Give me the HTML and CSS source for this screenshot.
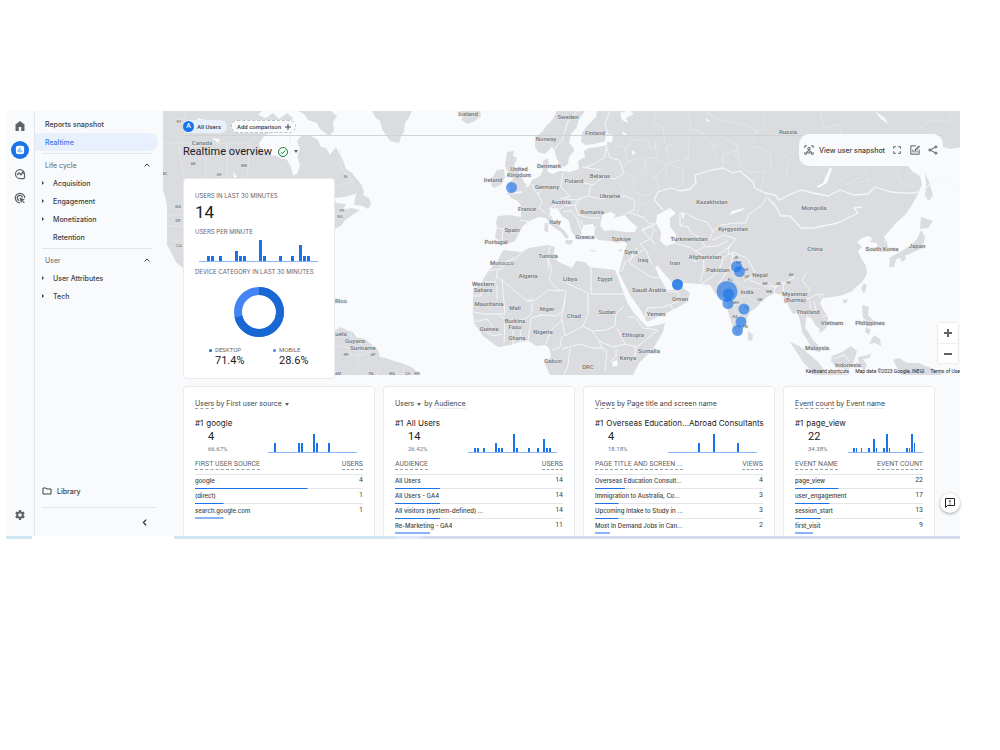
FILE: index.html
```html
<!DOCTYPE html>
<html lang="en">
<head>
    <meta charset="UTF-8">
    <meta name="viewport" content="width=device-width, initial-scale=1.0">
    <title>Realtime overview</title>
    <link rel="stylesheet" href="styles.css">
</head>
<body>
    <div class="app">
        <div class="rail">
            <button class="rail-btn" aria-label="Home"><svg viewBox="0 0 24 24"><path d="M12 2 3 9v13h6.500v-8h5v8H21V9z"/></svg></button>
            <button class="rail-btn active" aria-label="Reports"><svg viewBox="0 0 24 24"><path fill-rule="evenodd" d="M2 4q0-2 2-2h16q2 0 2 2v16q0 2-2 2H4q-2 0-2-2zM6.500 11v6.500h2V11zM11 6.500v11h2v-11zM15.500 14v3.500h2V14z"/></svg></button>
            <button class="rail-btn" aria-label="Explore"><svg viewBox="0 0 24 24" class="line"><path d="M21 20.500V12a9 9 0 1 0-9 9h9M6.500 14l3.500-4 4 3.500 4.500-5.500"/><path d="M15.500 8h3v3"/></svg></button>
            <button class="rail-btn" aria-label="Advertising"><svg viewBox="0 0 24 24" class="line"><path d="M21.500 12A9.500 9.500 0 1 0 12 21.500M17 11a5.200 5.200 0 1 0-6 6"/><path class="solid" d="m11 11 11 4-4.500 2 4 4-1.500 1.500-4-4-2 4z"/></svg></button>
            <button class="rail-btn bottom" aria-label="Admin"><svg viewBox="0 0 24 24"><path fill-rule="evenodd" d="m10 2-.5 3-2 1-2.700-1-2.300 4 2.200 2v2l-2.200 2 2.300 4 2.700-1 2 1 .5 3h4l.5-3 2-1 2.700 1 2.300-4-2.200-2v-2l2.200-2-2.300-4-2.700 1-2-1-.5-3zm2 6.500a3.500 3.500 0 1 1 0 7 3.500 3.500 0 0 1 0-7z"/></svg></button>
        </div>

        <nav class="nav">
            <a class="nav-link" href="#">Reports snapshot</a>
            <a class="nav-link current" href="#">Realtime</a>
            <hr>
            <button class="nav-group">Life cycle <svg viewBox="0 0 8 8"><path d="M1.500 5.500 4 3l2.500 2.500"/></svg></button>
            <a class="nav-item more" href="#">Acquisition</a>
            <a class="nav-item more" href="#">Engagement</a>
            <a class="nav-item more" href="#">Monetization</a>
            <a class="nav-item" href="#">Retention</a>
            <hr>
            <button class="nav-group">User <svg viewBox="0 0 8 8"><path d="M1.500 5.500 4 3l2.500 2.500"/></svg></button>
            <a class="nav-item more" href="#">User Attributes</a>
            <a class="nav-item more" href="#">Tech</a>
            <a class="nav-link library" href="#"><svg viewBox="0 0 10 10"><path d="M1 2h3l1 1h4v5H1z"/></svg>Library</a>
            <hr class="last">
            <button class="collapse" aria-label="Collapse"><svg viewBox="0 0 8 8"><path d="M5.500 1.500 3 4l2.500 2.500"/></svg></button>
        </nav>

        <main class="main">
            <section class="stage">
                <div class="map">
                    <svg class="map-svg" viewBox="163 111 797 264" preserveAspectRatio="xMinYMin slice">
                        <!-- Americas, Greenland, Iceland -->
                        <g class="land">
                            <path d="M162 111H262l-4 4 8 3 7-5 6 6 8-6 6 5-3 6-9 2-7 6-9 3-6 8 2 7 8 5 10 1 8 4 4 7 2 8 4-1 3-9-3-9 3-7-3-8 5-6 9 1 7 4 3 7 5 1 4 7 6-8 3 6 4 7 3 9 6 4 3 4 6 7 2 4-8 6-10 3-12 1 4 5 9 1-3 6 9-2 8 2-6 4-9 6-4 6-12 6v36H183l-7-6-4-8-5-9V206l-2-10-3-9z"/>
                            <path d="m354 205 2-11 4-7 4 3-1 5 6 3 2 6-3 5-5-3z"/>
                            <path d="M298 111h33l6 5-4 6 1 9-5 5-9-7-3-6-9-3-4-6zM372 111h40l-4 8-3 4-1 9-3 4-2 7-9-2-4-6-4-6-2-8-5-4z"/>
                            <path d="m457 112 7-2 16 1 1 5-6 5-7 3-7-4 3-4z"/>
                            <path d="m330 334 6-4 5-3 5 3 7 2 3 5 9 2 8 7 5 4 2 7 6 1 8 3 10 3 9 4 7 7h-90z"/>
                        </g>
                        <!-- Europe, Asia, Africa -->
                        <g class="land">
                            <path d="m557 111-4 8-6 6-5 7-7 5v10l3 5 7 2 7-7 3 4 1 6 5 9 3 1 4-3 1-7 5-6-1-4-4-4 2-9 6-7 2-8 6-8h12l-1 6-9 9-5 7-1 8 4 4 9-1 8-2 5-1v4l-9 2-9 1-5 3 1 6-7 4 1 8-9 3-10-1-8 3-5-3 2-6-1-7-5 3v10l-3 5-8 4-3 6-6 3-1 4-13 1 2 4 7 3 3 5v11l-11-2-12 1-2 6 1 5-2 11 5 3 7 3 8-3 4-8 4-7 6-5 10-4 7 1 6 8 9 6 5 7 3-2-5-7-9-7-5-9 1-5 6-1 5 8 7 5 2 9 5 8 6 2-1-9 3-6 9-1 2 4-1 6 4 6 12 1 7 2 8-2 2 3L623 257l-3 10-1 6 11 22 12 17 5 10 30-14 10-6 3-9-8-6-9 3-6 0-7-12-5-11 3-1 9 11 6 6 12 0 15 1 10 1 5 8 5 4 6 3 1 8 3 10 3 10 4 7 3-1 4-8 3-8 3-6 7-5 5-6 5-4 8-4 7 2 4 5 2 5 5 9 4-1 3 7 2 12 4 6 4 7 5 6 5 1-2-7-5-5-4-7-4-5 1-8 1-4 5 3 3 6 4 3 1 5 4-3 4-5v-8l-5-8-3-6 3-5 10-1 10-2 9-4 10-9 5-8-1-8-5-8-3-7 4-4-5-5 5-4 6-2 4 2-2 4 7 1 1 6 3 3h5l2-4-1-6-3-5 6-7 7-8 8-7 7-10 5-9 5-11-2-9-7-4-6-7 8-10 15-3 13-5 7 2 12-2V111z"/>
                            <path d="m503 250-6 12-9 9-7 12-8 9v21l1 10 9 13 15 11 13-2 8-3 10-1 7 5 9-1 4 3 2 8-6 8 5 11h83l6-12 14-14 10-17 2-9-7 2-11 2-5-5-8-9-7-11-5-14-7-18-9-1-16-2-5-5-9-1-4 7-13-6-6-5 2-10-7-2-19 3-8 4z"/>
                            <path d="m507 152 7-1-1 5 4 2-3 8 6 8 4 8 3 3-4 6-8 1-8 3 3-6-1-6 4-4-5-7-3-6zM493 177l4-7 7-1 1 8-3 7-8 4-3-3z"/>
                            <path d="m545 223 3 0v10l-4-3zM566 240l7 0-2 5-6-2zM589 250l8 1-4 1zM618 250l5-1-3 3z"/>
                            <path d="m925 173 4 9 4 13-4 6-4-5 1-12zM921 217l12 4-5 7-8 1zM921 230l4 7-3 11-8 4-12 5-10 4-3-3 11-6 11-7 6-6zM890 259l6 1-2 7-5 0zM900 258l5-2 1 3-4 3z"/>
                            <path d="m748 331 5 4-1 6-4-1zM864 283l3 3-3 8-3-6zM790 342l9 4 11 9 9 8 6 8v4h-10l-12-13zM832 356l10-4 9-6 6 5-3 10-5 8-12-1-6-7zM862 305l7 2-1 8 8 8-4 2-9-7zM866 327l5 3-2 5-4-3zM874 335l6 4 1 7-6-3-6 1zM858 357l10-2 4-2-3 5-6 1 4 6-3 6-5-7zM893 360l6-2 8 5 11 0 16 6 9 6h-42zM826 372l15 1 10 2h-26zM843 300l5-1-2 4-3 0z"/>
                        </g>
                        <!-- inland water -->
                        <g class="water">
                            <path d="m600 225 3-11 8-2 5 3-3 3 12-3 4 5 8 7-2 5-11 0-12-2-8 1zM657 215l13-7 6 5-6 5v9l6 7-1 9-9 3-6-5 1-9-5-9zM732 211l12-3-1 2-13 5zM620 113l9-3 5 4-8 4 2 5-6-3zM606 133l7 2-1 7-7 0zM622 131l5 3-3 2zM817 186l6-3 7-16 2 2-5 14-9 5zM875 111l10 7 3 6-8-6zM612 362l5-2 1 5-5 2zM196 118l10 2 6 4-8 1zM212 138l8 1-2 4zM233 171l4 6-3 1zM205 185l7 2-6 2zM301 121l8 3-2 4zM706 118l4 3-3 1zM681 212l4 1-2 7zM632 150l4 3-4 2z"/>
                        </g>
                        <g class="borders">
                            <path d="M577 111l-9 10-6 20-8 8M597 111l-5 7M610 111l-5 12 4 15M607 146l-3 12-10 6-8 3M600 170l-18-3M563 173l-2 14 9 9-10 3M573 180l20 5 10-8 12 2 9-6-5-13-9-2-4-12M591 186l-3 10 12 3 12-3 14 0 9 5-1 9-9 4M588 196l-10 4-12-1-7 5-8 3-2 11M544 187l-6 7 4 9-3 5 8 6M532 184l3 8 5 2M566 206l9-1 6-8M575 205l3 10 12 3 10 0M563 212l8-1 6 7 4 12M580 220l5 9 12-2M503 229l-1 15M497 228l7 1M520 220l14 3M548 208l10 2 8-5"/>
                            <path d="M525 250l-9 8-11 4-4 7-14 2M497 271v5l30 25 6-2M497 276l-2 6h-14v14h-8M502 279l3 35h-20l-11-2M497 299v-14M550 247l-3 12 5 9-3 12 9 10 8 1M548 270l1-12 6-6M591 264v30l26 0h8M588 301v-8l-22-10M566 291l-3 18-5 7-16-1-11 3M527 301h7l14-11 12 1M532 303v10l-7 6-18 2-8-6M565 300l-4 21-9 8-6 15M588 301v13l-5 12-18 10-3-16M583 326l9 5 14-1 9-4 1-12 8-8M592 331l7 10 14 6 12-3-8-16M562 336l-2 11-8 3M562 349l18-5 12 4 10 0M570 348l-2 17-4 10M599 341l3 7 5 3-2 20M625 344l12 3 10-8 11-9-15-2-8-11h-8M616 349v8l-6 5M635 347v14M531 318l-3 23M505 321l-1 22M513 344v-14M485 331l8 5 9-2M473 322l14-3 6 8M520 330l1 12M542 315l-3 0"/>
                            <path d="M623 263l12-7 9-7M637 247l-8 16 22 14 9 1M652 265l-6-15-6-6 10-5M625 263l-4 9M644 322l3-14 17-1 15-6-1-9-13-1M670 304l4 8M650 239l-8-10 8-3 7 5M630 213l13 4 7 7 7 0M654 230l-3 9 4 5M642 231l12-6M674 243l8 2 9 3 12 8 1 12-4 14M703 256l-8 6-4-4M680 212v14l8 1 3 6 8 4 6 9-10 6M680 226l4-3M686 213l10 6 11 3 6 9-4 9M713 231l8-6 14-2 11 0 2-8 14-10 5-9M712 240l12-5 12 4-6 6-2 8 8 3M705 247l12-1 11-5M703 256l10 2 15-10 4-5M733 252l-10 6-3 12-10 8-9 6M733 252l14 6 8 14-5 8 12 5 12 2 10-4 11-6"/>
                            <path class="thick" d="M663 210l-9-10 4-8 12-4 10 3 10-2 6-6-1-8 17-5 11-2 10 5 7-2 13 11 2 6 10 5 10 2 4 5 10-5 12-5 12 3 15 3 12-6 14 5 14-1 7-7 16 5 13 1 10 0 8-2 12-10 10-6 12 9 3 10 8 4 8 1-2 10-7 6M768 198l8 9 5 9 9 0 11 12h12l15-3 10-2 12-6 8-4-4-5 8-1"/>
                            <path d="M790 279l-7 6 1 9M783 282l-8 6-6-6M775 288l-1 6M806 273l-4 8 8 8-3 5M798 300l12-2 7-4 7 1M810 300v14M817 294l9 9 4 11-7 3M816 310l-2-9M744 282l7-6M733 252l-2 14-12 17M890 236l-6 6M843 353l6 8M833 359l12-4M630 303l-3 0"/>
                        </g>
                        <!-- province and oblast lines -->
                        <g class="borders thin">
                            <path d="M185 111v24l-7 9 6 34M206 143v35M227 143v35M206 143h45M250 143l-3 35M162 143h38M290 133v30M340 148l1 20 12 14-20 5M168 215h16M168 226h14M172 240l12 2M371 352l-14 5 3 14M335 345l13 3 4 8 10-2M382 365l-6 10M395 366l2 9M404 368l-2 7M350 330l4 17M362 341l-2 11"/>
                            <path d="M615 145l12 3 5-8 15 0 4 9 14-7-2-15-9-4 3-12M655 140l2 19 11 6-3 14M625 148l2 14-5 8 13 9 10-7 12 8M627 162l13-4 6 7M635 179l-2 12 12 5 8-4M645 172l1-13 11-2M670 165l13 4v14M670 165l-4-18 9-4M689 111l1 16 15 8 9 12 14-8 10 7-4 10 7 5M690 127l-2 32-18 4M688 159l7 7M714 147l2 12M724 165l-2-10 15-5M738 147l0 18 12 8 15-2-3 14M762 111l4 14-10 8-6 12 20 7 1 15 9 5M705 111l13 9 30 5 10 8M780 152l9 7-3 15 8 4M668 163l-13 14 4 14M683 183l-9 7M600 150l10-5M618 181l7 14 8-4M640 205l9-4 8 11M640 197l-3 17M648 210l-5 9M820 111l4 17 14-4 3 10M862 168l8 11-12 4M835 175l12 10 12-8M897 168l3 15 14 4M920 127l13-7 16 2 4-9"/>
                            <path d="M732 262l8 3 4-5M740 265l-1 12-10 4M735 281l12 7 13 1 8 6M731 298l16-2 9 6M735 303v11l10 1M727 290l7 4M733 320l8 6M766 279l-2 8 8 3M750 296l4-8M745 303l9 4"/>
                        </g>
                        <g class="places">
                            <text x="202" y="145">Canada</text><text x="468" y="116">Iceland</text><text x="568" y="119">Sweden</text><text x="546" y="141">Norway</text><text x="595" y="135">Finland</text><text x="788" y="134">Russia</text><text x="549" y="168">Denmark</text><text x="519" y="171">United</text><text x="519" y="177">Kingdom</text><text x="493" y="182">Ireland</text><text x="547" y="189">Germany</text><text x="574" y="183">Poland</text><text x="600" y="178">Belarus</text><text x="610" y="198">Ukraine</text><text x="561" y="204">Austria</text><text x="527" y="211">France</text><text x="592" y="214">Romania</text><text x="555" y="224">Italy</text><text x="512" y="232">Spain</text><text x="496" y="244">Portugal</text><text x="585" y="239">Greece</text><text x="621" y="241">Türkiye</text><text x="631" y="254">Syria</text><text x="643" y="262">Iraq</text><text x="675" y="265">Iran</text>
                            <text x="712" y="204">Kazakhstan</text><text x="733" y="231">Kyrgyzstan</text><text x="689" y="241">Turkmenistan</text><text x="705" y="259">Afghanistan</text><text x="718" y="272">Pakistan</text><text x="760" y="277">Nepal</text><text x="747" y="294">India</text><text x="815" y="251">China</text><text x="814" y="210">Mongolia</text><text x="882" y="251">South Korea</text><text x="917" y="248">Japan</text><text x="795" y="296">Myanmar</text><text x="795" y="302">(Burma)</text><text x="808" y="314">Thailand</text><text x="832" y="325">Vietnam</text><text x="870" y="325">Philippines</text><text x="817" y="350">Malaysia</text><text x="848" y="367">Indonesia</text>
                            <text x="548" y="258">Tunisia</text><text x="502" y="265">Morocco</text><text x="528" y="278">Algeria</text><text x="570" y="281">Libya</text><text x="605" y="281">Egypt</text><text x="483" y="286">Western</text><text x="483" y="292">Sahara</text><text x="489" y="306">Mauritania</text><text x="515" y="310">Mali</text><text x="547" y="311">Niger</text><text x="574" y="318">Chad</text><text x="607" y="314">Sudan</text><text x="515" y="323">Burkina</text><text x="515" y="329">Faso</text><text x="489" y="331">Guinea</text><text x="517" y="340">Ghana</text><text x="543" y="334">Nigeria</text><text x="633" y="337">Ethiopia</text><text x="649" y="353">Somalia</text><text x="628" y="360">Kenya</text><text x="553" y="363">Gabon</text><text x="588" y="369">DRC</text><text x="656" y="316">Yemen</text><text x="649" y="292">Saudi Arabia</text><text x="680" y="301">Oman</text>
                            <text x="341" y="303">Rico</text><text x="341" y="336">uela</text><text x="355" y="343">Guyana</text><text x="363" y="350">Suriname</text>
                        </g>
                        <g class="places small">
                            <text x="179" y="123">NT</text><text x="193" y="165">AB</text><text x="244" y="167">MB</text><text x="219" y="176">SK</text><text x="165" y="175">BC</text><text x="178" y="208">WA</text><text x="178" y="222">OR</text><text x="179" y="247">CA</text><text x="346" y="178">NL</text><text x="342" y="212">PE</text><text x="340" y="218">NS</text><text x="346" y="356">RR</text><text x="373" y="356">AP</text><text x="338" y="375">AM</text><text x="371" y="375">PA</text><text x="392" y="375">MA</text><text x="408" y="375">CE</text><text x="417" y="375">RN</text>
                            <text x="736" y="259">JK</text><text x="739" y="264">HP</text><text x="746" y="271">UK</text><text x="747" y="278">UP</text><text x="730" y="281">RJ</text><text x="765" y="285">BR</text><text x="779" y="285">ML</text><text x="789" y="284">NL</text><text x="791" y="276">AR</text><text x="769" y="293">WB</text><text x="760" y="301">OR</text><text x="736" y="304">MH</text><text x="746" y="309">TS</text><text x="735" y="318">KA</text><text x="745" y="328">TN</text>
                        </g>
                        <g class="pins">
                            <circle cx="511.500" cy="187.500" r="5.500"/>
                            <circle class="strong" cx="677.500" cy="284.500" r="5.500"/>
                            <circle cx="736.500" cy="266.500" r="5.500"/>
                            <circle cx="739.500" cy="271.500" r="5.500"/>
                            <circle cx="727" cy="291.500" r="10.500"/>
                            <circle cx="728.500" cy="294" r="5.500"/>
                            <circle cx="728" cy="303.500" r="5.500"/>
                            <circle cx="744" cy="309" r="5.500"/>
                            <circle cx="741" cy="322" r="5.500"/>
                            <circle cx="737.500" cy="330.500" r="5.500"/>
                        </g>
                    </svg>
                    <div class="zoom">
                        <button aria-label="Zoom in"><svg viewBox="0 0 10 10"><path d="M5 1v8M1 5h8"/></svg></button>
                        <button aria-label="Zoom out"><svg viewBox="0 0 10 10"><path d="M1 5h8"/></svg></button>
                    </div>
                    <div class="credits">
                        <button>Keyboard shortcuts</button>
                        <span>Map data ©2023 Google, INEGI</span>
                        <a href="#">Terms of Use</a>
                    </div>
                </div>

                <div class="overlay">
                    <div class="chips">
                        <button class="chip"><span class="avatar">A</span>All Users</button>
                        <button class="chip add">Add comparison <svg viewBox="0 0 8 8"><path d="M4 1v6M1 4h6"/></svg></button>
                    </div>
                    <header class="header">
                        <div class="heading">
                            <h1>Realtime overview</h1>
                            <button class="status" aria-label="Data status">
                                <svg viewBox="0 0 12 12"><circle cx="6" cy="6" r="4.500"/><path d="m3.800 6.200 1.600 1.500 2.900-3.200"/></svg>
                                <i class="caret"></i>
                            </button>
                        </div>
                        <div class="toolbar">
                            <button class="snapshot"><svg viewBox="0 0 24 24"><path d="M2 7V2h5M17 2h5v5M2 17v5h5M22 17v5h-5"/><circle cx="12" cy="9" r="3"/><path d="M6 19q0-5 6-5t6 5z"/></svg>View user snapshot</button>
                            <button aria-label="Full screen"><svg viewBox="0 0 24 24"><path d="M4 9V4h5M15 4h5v5M4 15v5h5M20 15v5h-5"/></svg></button>
                            <button aria-label="Customize report"><svg viewBox="0 0 24 24"><path d="M14 2H2v20h20V11M7 11v7M12 14v4M17 14v4M12 12 21 2l2 2-9 9h-2z"/></svg></button>
                            <button aria-label="Share"><svg viewBox="0 0 24 24"><circle cx="4.500" cy="12" r="2.500"/><circle cx="19" cy="4.500" r="2.500"/><circle cx="19" cy="19.500" r="2.500"/><path d="m7 11 10-5.500M7 13l10 5.500"/></svg></button>
                        </div>
                    </header>

                    <section class="card live">
                        <h2 class="label">USERS IN LAST 30 MINUTES</h2>
                        <p class="total">14</p>
                        <h2 class="label">USERS PER MINUTE</h2>
                        <div class="bars" data-values="0,0,1,1,0,1,0,0,0,2,1,1,0,0,0,4,1,0,0,0,1,0,0,1,0,3,1,1,0,0"></div>
                        <h2 class="label">DEVICE CATEGORY IN LAST 30 MINUTES</h2>
                        <svg class="donut" viewBox="0 0 50 50">
                            <circle class="mobile" cx="25" cy="25" r="21" pathLength="100"/>
                            <circle class="desktop" cx="25" cy="25" r="21" pathLength="100"/>
                        </svg>
                        <dl class="legend">
                            <div><dt>DESKTOP</dt><dd>71.4%</dd></div>
                            <div class="light"><dt>MOBILE</dt><dd>28.6%</dd></div>
                        </dl>
                    </section>
                </div>
            </section>

            <section class="cards">
                <article class="card">
                    <h2 class="title"><span class="dash">Users</span> by <button>First user source <i class="caret"></i></button></h2>
                    <p class="top"><span>#1</span>google</p>
                    <div class="summary">
                        <p class="count">4</p>
                        <p class="share">66.67%</p>
                        <div class="bars" data-values="0,0,1,0,0,0,0,0,0,0,1,1,0,0,0,2,1,0,0,0,1,0,0,0,0,0,0,0,0,0"></div>
                    </div>
                    <table>
                        <thead><tr><th><span>FIRST USER SOURCE</span></th><th><span>USERS</span></th></tr></thead>
                        <tbody>
                            <tr style="--share: 67%"><td>google</td><td>4</td></tr>
                            <tr style="--share: 17%"><td>(direct)</td><td>1</td></tr>
                            <tr style="--share: 17%"><td>search.google.com</td><td>1</td></tr>
                        </tbody>
                    </table>
                </article>

                <article class="card">
                    <h2 class="title"><button>Users <i class="caret"></i></button> by <span class="faint">Audience</span></h2>
                    <p class="top"><span>#1</span>All Users</p>
                    <div class="summary">
                        <p class="count">14</p>
                        <p class="share">26.42%</p>
                        <div class="bars" data-values="0,0,1,1,0,1,0,0,0,2,1,1,0,0,0,4,1,0,0,0,1,0,0,1,0,3,1,1,0,0"></div>
                    </div>
                    <table>
                        <thead><tr><th><span>AUDIENCE</span></th><th><span>USERS</span></th></tr></thead>
                        <tbody>
                            <tr style="--share: 27%"><td>All Users</td><td>14</td></tr>
                            <tr style="--share: 27%"><td>All Users - GA4</td><td>14</td></tr>
                            <tr style="--share: 27%"><td>All visitors (system-defined) ...</td><td>14</td></tr>
                            <tr style="--share: 21%"><td>Re-Marketing - GA4</td><td>11</td></tr>
                        </tbody>
                    </table>
                </article>

                <article class="card">
                    <h2 class="title"><span class="dash">Views</span> by <span class="faint">Page title and screen name</span></h2>
                    <p class="top"><span>#1</span>Overseas Education...Abroad Consultants</p>
                    <div class="summary">
                        <p class="count">4</p>
                        <p class="share">18.18%</p>
                        <div class="bars" data-values="0,0,0,0,0,0,0,0,0,0,1,0,0,0,0,2,0,0,0,0,0,0,0,1,0,0,0,0,0,0"></div>
                    </div>
                    <table>
                        <thead><tr><th><span>PAGE TITLE AND SCREEN ...</span></th><th><span>VIEWS</span></th></tr></thead>
                        <tbody>
                            <tr style="--share: 18%"><td>Overseas Education Consult...</td><td>4</td></tr>
                            <tr style="--share: 14%"><td>Immigration to Australia, Co...</td><td>3</td></tr>
                            <tr style="--share: 14%"><td>Upcoming Intake to Study in ...</td><td>3</td></tr>
                            <tr style="--share: 9%"><td>Most In Demand Jobs in Can...</td><td>2</td></tr>
                        </tbody>
                    </table>
                </article>

                <article class="card narrow">
                    <h2 class="title"><span class="dash">Event count</span> by <span class="faint">Event name</span></h2>
                    <p class="top"><span>#1</span>page_view</p>
                    <div class="summary">
                        <p class="count">22</p>
                        <p class="share">34.38%</p>
                        <div class="bars" data-values="0,0,1,1,0,1,0,0,1,0,3,1,0,0,1,4,1,0,0,0,0,0,0,1,1,4,2,0,0,0"></div>
                    </div>
                    <table>
                        <thead><tr><th><span>EVENT NAME</span></th><th><span>EVENT COUNT</span></th></tr></thead>
                        <tbody>
                            <tr style="--share: 34%"><td>page_view</td><td>22</td></tr>
                            <tr style="--share: 27%"><td>user_engagement</td><td>17</td></tr>
                            <tr style="--share: 20%"><td>session_start</td><td>13</td></tr>
                            <tr style="--share: 14%"><td>first_visit</td><td>9</td></tr>
                        </tbody>
                    </table>
                </article>
            </section>

            <button class="feedback" aria-label="Send feedback"><svg viewBox="0 0 24 24"><path d="M3 3h18v14H7l-4 4zM12 6v5M12 13v2"/></svg></button>
        </main>
    </div>
    <div class="strip"></div>

    <script>
        // one bar per minute, scaled to the busiest minute
        document.querySelectorAll('.bars').forEach(function (chart) {
            const values = chart.dataset.values.split(',').map(Number);
            const max = Math.max(...values);

            values.forEach(function (value) {
                const bar = document.createElement('span');
                bar.style.height = (value / max * 100) + '%';
                chart.appendChild(bar);
            });
        });
    </script>
</body>
</html>
```
FILE: styles.css
```css
* {
    margin: 0;
    padding: 0;
    box-sizing: border-box;
}

body {
    background: #fff;
    padding: 111px 40px 0 6px;
    font-family: Roboto, 'Liberation Sans', sans-serif;
    font-size: 7px;
    color: #3c4043;
}

button {
    border: none;
    background: none;
    font: inherit;
    color: inherit;
    cursor: pointer;
}

a {
    color: inherit;
    text-decoration: none;
}

svg {
    display: block;
}

.app {
    display: flex;
    background: #f8fafc;
}

/* icon rail */
.rail {
    width: 29px;
    padding: 3px 0 9px;
    display: flex;
    flex-direction: column;
    border-right: 1px solid #e3e5e8;
}

.rail-btn {
    height: 24px;
    display: flex;
    justify-content: center;
    align-items: center;
}

.rail-btn svg {
    width: 12px;
    height: 12px;
    fill: #5f6368;
}

.rail-btn .line {
    fill: none;
    stroke: #5f6368;
    stroke-width: 2.5;
}

.rail-btn .solid {
    fill: #5f6368;
    stroke: none;
}

.rail-btn.active svg {
    width: 18px;
    height: 18px;
    padding: 4px;
    border-radius: 50%;
    background: #1a73e8;
    fill: #fff;
}

.rail-btn.bottom {
    margin-top: auto;
}

/* report navigation */
.nav {
    width: 128px;
    padding-top: 4px;
    display: flex;
    flex-direction: column;
    font-family: Inter, Roboto, sans-serif;
}

.nav hr {
    border: none;
    border-top: 1px solid #e3e5e8;
    margin: 2px 10px 2px 7px;
}

.nav-link,
.nav-item,
.nav-group {
    height: 18px;
    padding-left: 10px;
    display: flex;
    align-items: center;
    font-weight: 500;
}

.nav-link.current {
    margin-right: 5px;
    background: #e8f0fe;
    color: #3b78e7;
    border-radius: 0 9px 9px 0;
}

.nav-group {
    justify-content: space-between;
    padding-right: 12px;
    font-weight: 400;
    color: #5f6368;
}

.nav-group svg,
.collapse svg {
    width: 8px;
    height: 8px;
    fill: none;
    stroke: #3c4043;
}

.nav-item {
    padding-left: 18px;
}

.nav-item.more {
    padding-left: 7px;
    gap: 9px;
}

.nav-item.more::before {
    content: '';
    border: 2px solid transparent;
    border-left-color: #3c4043;
    border-right: none;
}

.nav-link.library {
    margin-top: auto;
    padding-left: 7px;
    gap: 5px;
}

.library svg {
    width: 10px;
    height: 10px;
    fill: none;
    stroke: #3c4043;
}

.nav hr.last {
    margin: 7px 7px 0;
}

.collapse {
    height: 28px;
    padding-right: 14px;
    display: flex;
    justify-content: flex-end;
    align-items: center;
}

.collapse svg {
    width: 9px;
    height: 9px;
    stroke: #202124;
}

/* map */
.main {
    flex: 1;
    min-width: 0;
    position: relative;
}

.stage {
    display: grid;
}

.map,
.overlay {
    grid-area: 1 / 1;
    min-width: 0;
}

.map {
    position: relative;
    align-self: start;
}

.map-svg {
    width: 100%;
    height: 264px;
    background: #f8fafc;
}

.land {
    fill: #dadce0;
}

.water {
    fill: #f8fafc;
}

.borders {
    fill: none;
    stroke: #f4f6f8;
    stroke-width: 1;
    stroke-linejoin: round;
}

.borders .thick {
    stroke-width: 1.3;
}

.borders.thin {
    stroke: #e8eaed;
    stroke-width: 0.7;
}

.places {
    fill: #6f7378;
    font-size: 6px;
    font-weight: 500;
    text-anchor: middle;
    paint-order: stroke;
    stroke: #e6e8ea;
    stroke-width: 1px;
}

.places.small {
    font-size: 4px;
}

.pins {
    fill: #1a73e8;
    fill-opacity: 0.65;
}

.pins .strong {
    fill-opacity: 0.85;
}

.zoom {
    position: absolute;
    right: 2px;
    bottom: 12px;
    width: 20px;
    background: #fff;
    border-radius: 1px;
    box-shadow: 0 0 2px rgba(0, 0, 0, 0.2);
}

.zoom button {
    width: 100%;
    height: 20px;
    display: flex;
    justify-content: center;
    align-items: center;
}

.zoom button + button {
    border-top: 1px solid #eee;
}

.zoom svg {
    width: 10px;
    height: 10px;
    stroke: #5f6368;
    stroke-width: 2;
}

.credits {
    position: absolute;
    right: 0;
    bottom: 0;
    display: flex;
    gap: 6px;
    font-size: 5px;
    line-height: 8px;
    color: #202124;
}

/* content above the map */
.overlay {
    padding: 9px 17px 0 20px;
    z-index: 1;
    pointer-events: none;
}

.overlay > * {
    pointer-events: auto;
}

.chips {
    display: flex;
    gap: 4px;
    margin-bottom: 1px;
}

.chip {
    height: 13px;
    padding-right: 6px;
    display: flex;
    align-items: center;
    gap: 3px;
    border-radius: 7px;
    background: #e8f0fe;
    font-size: 6px;
    font-weight: 500;
}

.avatar {
    width: 11px;
    line-height: 11px;
    border-radius: 50%;
    background: #1a73e8;
    color: #fff;
    font-size: 7px;
    text-align: center;
}

.chip.add {
    padding: 0 3px 0 5px;
    border: 1px dashed #bdc1c6;
    background: #f8fafc;
}

.add svg {
    width: 8px;
    height: 8px;
    stroke: #3c4043;
}

.header {
    height: 32px;
    display: flex;
    align-items: center;
    background: linear-gradient(#d0d2d6, #d0d2d6) 0 1px / 100% 1px no-repeat;
}

.heading {
    padding-top: 3px;
    display: flex;
    align-items: center;
    gap: 3px;
}

h1 {
    font-size: 11px;
    font-weight: 400;
    line-height: 14px;
    color: #202124;
}

.status {
    height: 14px;
    padding-left: 2px;
    display: flex;
    align-items: center;
    gap: 5px;
    border-radius: 7px 0 0 7px;
    background: rgba(248, 250, 252, 0.6);
}

.status svg {
    width: 12px;
    height: 12px;
    fill: none;
    stroke: #188038;
}

.caret {
    display: inline-block;
    border: 2px solid transparent;
    border-top: 3px solid #5f6368;
    border-bottom: none;
}

.toolbar {
    height: 32px;
    margin-left: auto;
    padding: 0 4px;
    display: flex;
    align-items: center;
    gap: 6px;
    border-radius: 10px;
    background: #f8fafc;
    font-family: Inter, Roboto, sans-serif;
}

.toolbar svg {
    width: 12px;
    height: 12px;
    padding: 1px;
    fill: none;
    stroke: #3c4043;
    stroke-width: 2;
}

.snapshot {
    display: flex;
    align-items: center;
    gap: 4px;
    font-weight: 500;
}

/* cards */
.card {
    min-width: 0;
    padding: 12px 11px 2px;
    border: 1px solid #e8eaed;
    border-radius: 4px;
    background: #fff;
}

.live {
    width: 152px;
    margin-top: 12px;
    padding-bottom: 11px;
}

.label {
    font-family: Inter, Roboto, sans-serif;
    font-size: 6px;
    font-weight: 400;
    line-height: 10px;
    color: #5f6368;
}

.total {
    margin: 1px 0 5px;
    font-size: 17px;
    line-height: 20px;
    color: #202124;
}

.bars {
    display: flex;
    align-items: flex-end;
    gap: 1px;
    border-bottom: 1px solid #8ab4f8;
}

.bars span {
    flex: 1;
    background: #1a73e8;
}

.live .bars {
    width: 119px;
    height: 22px;
    margin: 3px 4px 5px;
}

.donut {
    width: 50px;
    height: 50px;
    margin: 10px auto 8px;
}

.donut circle {
    fill: none;
    stroke-width: 8;
    transform: rotate(-90deg);
    transform-origin: center;
}

.donut .mobile {
    stroke: #4285f4;
}

.donut .desktop {
    stroke: #1967d2;
    stroke-dasharray: 71.4 28.6;
}

.legend {
    display: grid;
    grid-template-columns: 64px 1fr;
    padding-left: 14px;
}

.legend dt {
    display: flex;
    align-items: center;
    gap: 3px;
    font-size: 6px;
    line-height: 10px;
    color: #5f6368;
}

.legend dt::before {
    content: '';
    width: 3px;
    height: 3px;
    border-radius: 50%;
    background: #1967d2;
}

.legend .light dt::before {
    background: #4285f4;
}

.legend dd {
    padding-left: 6px;
    font-size: 11px;
    line-height: 12px;
    color: #202124;
}

.cards {
    display: grid;
    grid-template-columns: 192fr 192fr 192fr 152fr;
    gap: 8px;
    margin: 7px 25px 0 20px;
}

.cards .card {
    border-bottom: none;
    border-radius: 4px 4px 0 0;
}

.title {
    font-family: Inter, Roboto, sans-serif;
    font-size: 7px;
    font-weight: 400;
    line-height: 10px;
    white-space: nowrap;
}

.title .caret {
    vertical-align: middle;
    margin: 0 1px;
}

.dash {
    border-bottom: 1px dashed #9aa0a6;
}

.faint {
    border-bottom: 1px solid #eceef0;
}

.top {
    margin: 9px 0 1px;
    display: flex;
    gap: 3px;
    font-family: Inter, Roboto, sans-serif;
    font-size: 8px;
    line-height: 11px;
    color: #202124;
    white-space: nowrap;
}

.summary {
    display: grid;
    grid-template-columns: 1fr 89px;
    padding: 0 6px 0 13px;
    margin-bottom: 4px;
}

.narrow .summary {
    grid-template-columns: 1fr 75px;
    padding-right: 0;
}

.count {
    font-size: 11px;
    line-height: 14px;
    color: #202124;
}

.share {
    font-size: 6px;
    line-height: 9px;
    color: #70757a;
}

.summary .bars {
    grid-area: 1 / 2 / 3 / 3;
    align-self: end;
    height: 19px;
}

table {
    width: 100%;
    border-collapse: collapse;
}

th {
    height: 17px;
    border-bottom: 1px solid #e3e5e8;
    font-size: 7px;
    font-weight: 400;
    line-height: 9px;
    color: #5f6368;
    text-align: left;
}

th span {
    display: inline-block;
    border-bottom: 1px dashed #9aa0a6;
}

td {
    height: 15px;
    padding-bottom: 2px;
    font-family: Inter, Roboto, sans-serif;
    font-size: 6px;
    font-weight: 500;
    line-height: 9px;
}

td:last-child {
    font-family: Roboto, sans-serif;
    font-size: 7px;
    font-weight: 400;
}

th:last-child,
td:last-child {
    text-align: right;
}

tbody tr {
    background:
        linear-gradient(#1a73e8, #1a73e8) left bottom / var(--share) 1px no-repeat,
        linear-gradient(#e3e5e8, #e3e5e8) left bottom / 100% 1px no-repeat;
}

tbody tr:last-child {
    background: linear-gradient(#8ab4f8, #8ab4f8) left bottom / var(--share) 2px no-repeat;
}

.feedback {
    position: absolute;
    right: 0;
    bottom: 23px;
    width: 20px;
    height: 20px;
    display: flex;
    justify-content: center;
    align-items: center;
    border-radius: 50%;
    background: #fff;
    box-shadow: 0 1px 3px rgba(0, 0, 0, 0.35);
}

.feedback svg {
    width: 12px;
    height: 12px;
    fill: none;
    stroke: #202124;
    stroke-width: 2;
}

.strip {
    height: 3px;
    background: linear-gradient(90deg, #cfe6ee 2.7%, #fff 2.7% 17.6%, #cfe6ee 17.6% 40.5%, #dfeaf6 41% 43%, #d2deec 44%);
}
```
